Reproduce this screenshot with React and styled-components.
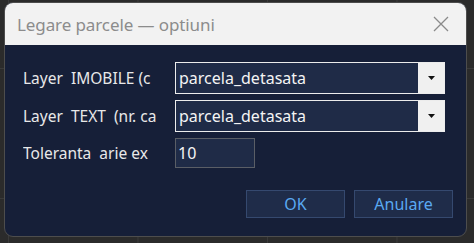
import React from "react";
import styled, { createGlobalStyle } from "styled-components";

const GlobalStyle = createGlobalStyle`
  html, body {
    margin: 0;
    padding: 0;
    width: 474px;
    height: 243px;
    overflow: hidden;
    background: #2b2b2b;
  }
  body {
    font-family: "Noto Sans", "Open Sans", sans-serif;
  }
`;

const Desk = styled.div`
  width: 474px;
  height: 243px;
  box-sizing: border-box;
  padding: 2px 7px 0 4px;
  background-color: #2b2b2b;
  background-image: linear-gradient(to right, #3a3a3a 1px, transparent 1px),
    linear-gradient(to bottom, #3a3a3a 1px, transparent 1px);
  background-size: 129.5px 130px;
  background-position: 8px 68px;
`;

const Window = styled.div`
  width: 463px;
  height: 235px;
  box-sizing: border-box;
  border: 1px solid #4d4d4d;
  border-radius: 9px;
  overflow: hidden;
  background: #161f38;
  display: flex;
  flex-direction: column;
`;

const TitleBar = styled.div`
  height: 42px;
  flex: none;
  background: #f2f2f2;
  display: flex;
  align-items: center;
  justify-content: space-between;
  padding: 0 17px 0 12px;
`;

const Title = styled.span`
  color: #8c8c8c;
  font-size: 17px;
  letter-spacing: -0.1px;
`;

const Body = styled.div`
  flex: 1;
  display: flex;
  flex-direction: column;
  padding: 17px 13px 0 18px;
`;

const Row = styled.div`
  display: flex;
  align-items: center;
  height: ${(p) => p.$h}px;
  margin-bottom: ${(p) => p.$mb}px;
`;

const Label = styled.div`
  width: 152px;
  flex: none;
  overflow: hidden;
  white-space: pre;
  color: #e8e8e8;
  font-size: 15.5px;
`;

const Combo = styled.div`
  width: 270px;
  height: 32px;
  box-sizing: border-box;
  border: 1px solid #ececec;
  display: flex;
  background: #1f2b47;
`;

const ComboText = styled.div`
  flex: 1;
  display: flex;
  align-items: center;
  padding-left: 3px;
  color: #f4f4f4;
  font-size: 16px;
`;

const Arrow = styled.div`
  width: 26px;
  background: #f0f0f0;
  display: flex;
  align-items: center;
  justify-content: center;
`;

const Field = styled.div`
  width: 80px;
  height: 30px;
  box-sizing: border-box;
  border: 1px solid #5a5e66;
  background: #1f2b47;
  color: #f4f4f4;
  font-size: 16px;
  display: flex;
  align-items: center;
  padding-left: 2px;
`;

const Buttons = styled.div`
  display: flex;
  justify-content: flex-end;
  gap: 9px;
  margin-top: 22px;
`;

const Button = styled.div`
  width: 99px;
  height: 28px;
  box-sizing: border-box;
  border: 1px solid #35496f;
  background: #1f2c49;
  color: #5aa9f2;
  font-size: 16px;
  display: flex;
  align-items: center;
  justify-content: center;
`;

function Caret() {
  return (
    <svg width="7" height="4" viewBox="0 0 7 4">
      <path d="M0 0h7L3.5 4z" fill="#111" />
    </svg>
  );
}

function Close() {
  return (
    <svg width="16" height="16" viewBox="0 0 16 16">
      <path d="M1 1L15 15M15 1L1 15" stroke="#8a8a8a" strokeWidth="1.3" />
    </svg>
  );
}

export default function App() {
  return (
    <>
      <GlobalStyle />
      <Desk>
        <Window>
          <TitleBar>
            <Title>Legare parcele — optiuni</Title>
            <Close />
          </TitleBar>
          <Body>
            <Row $h={32} $mb={6}>
              <Label>Layer  IMOBILE (c</Label>
              <Combo>
                <ComboText>parcela_detasata</ComboText>
                <Arrow>
                  <Caret />
                </Arrow>
              </Combo>
            </Row>
            <Row $h={32} $mb={6}>
              <Label>Layer  TEXT  (nr. ca</Label>
              <Combo>
                <ComboText>parcela_detasata</ComboText>
                <Arrow>
                  <Caret />
                </Arrow>
              </Combo>
            </Row>
            <Row $h={30} $mb={0}>
              <Label>Toleranta  arie ex</Label>
              <Field>10</Field>
            </Row>
            <Buttons>
              <Button>OK</Button>
              <Button>Anulare</Button>
            </Buttons>
          </Body>
        </Window>
      </Desk>
    </>
  );
}
